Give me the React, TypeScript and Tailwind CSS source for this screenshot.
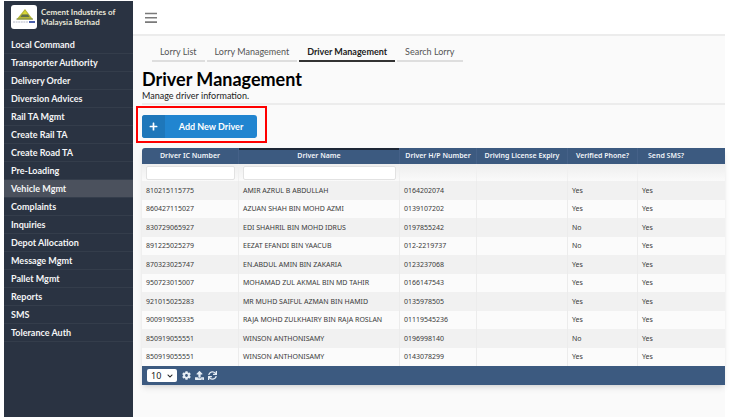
import React, { useState } from 'react';
import { FaChevronDown, FaCog, FaPlus, FaSync, FaUpload } from 'react-icons/fa';

interface Driver {
    ic: string;
    name: string;
    phone: string;
    verified: string;
    sms: string;
}

const menuItems = [
    'Local Command',
    'Transporter Authority',
    'Delivery Order',
    'Diversion Advices',
    'Rail TA Mgmt',
    'Create Rail TA',
    'Create Road TA',
    'Pre-Loading',
    'Vehicle Mgmt',
    'Complaints',
    'Inquiries',
    'Depot Allocation',
    'Message Mgmt',
    'Pallet Mgmt',
    'Reports',
    'SMS',
    'Tolerance Auth',
];

const tabs = ['Lorry List', 'Lorry Management', 'Driver Management', 'Search Lorry'];

const drivers: Driver[] = [
    { ic: '810215115775', name: 'AMIR AZRUL B ABDULLAH', phone: '0164202074', verified: 'Yes', sms: 'Yes' },
    { ic: '860427115027', name: 'AZUAN SHAH BIN MOHD AZMI', phone: '0139107202', verified: 'Yes', sms: 'Yes' },
    { ic: '830729065927', name: 'EDI SHAHRIL BIN MOHD IDRUS', phone: '0197855242', verified: 'No', sms: 'Yes' },
    { ic: '891225025279', name: 'EEZAT EFANDI BIN YAACUB', phone: '012-2219737', verified: 'No', sms: 'Yes' },
    { ic: '870323025747', name: 'EN.ABDUL AMIN BIN ZAKARIA', phone: '0123237068', verified: 'Yes', sms: 'Yes' },
    { ic: '950723015007', name: 'MOHAMAD ZUL AKMAL BIN MD TAHIR', phone: '0166147543', verified: 'Yes', sms: 'Yes' },
    { ic: '921015025283', name: 'MR MUHD SAIFUL AZMAN BIN HAMID', phone: '0135978505', verified: 'Yes', sms: 'Yes' },
    { ic: '900919055335', name: 'RAJA MOHD ZULKHAIRY BIN RAJA ROSLAN', phone: '01119545236', verified: 'Yes', sms: 'Yes' },
    { ic: '850919055551', name: 'WINSON ANTHONISAMY', phone: '0196998140', verified: 'No', sms: 'Yes' },
    { ic: '850919055551', name: 'WINSON ANTHONISAMY', phone: '0143078299', verified: 'Yes', sms: 'Yes' },
];

const Logo: React.FC = () => (
    <svg viewBox="0 0 26 24" className="h-6 w-[26px] shrink-0 rounded-[3px] bg-white" aria-hidden="true">
        <path d="M14 4 L22 14.5 H5.5 Z" fill="#b3b532" />
        <path d="M14 5.5 L17 9.5 H11 Z" fill="#d9d636" />
        <path d="M11 9.5 H17 L18.5 12 H9.5 Z" fill="#5f6e4a" />
        <path d="M5.5 14 H22" stroke="#7d8a4a" strokeWidth="1" />
        <path d="M2 17 H17" stroke="#b4b8c8" strokeWidth="1" strokeDasharray="2 0.6" />
        <path d="M18 17 H24" stroke="#4a60ac" strokeWidth="2" />
    </svg>
);

const Sidebar: React.FC = () => (
    <aside className="w-[129px] shrink-0 bg-[#2a3342] text-[#f4f5f6]">
        <div className="flex h-[35px] items-start gap-1 pt-1 pl-[7px]">
            <Logo />
            <p className="pt-[2px] text-[8px] leading-[10px] font-bold text-[#e8e6d8]">
                Cement Industries of
                <br />
                Malaysia Berhad
            </p>
        </div>
        <nav>
            {menuItems.map((item) => (
                <a
                    key={item}
                    href="#"
                    className={`block h-[18px] border-b border-[#343d4b] pl-[7px] text-[9px] leading-[18px] font-bold ${item === 'Vehicle Mgmt' ? 'bg-[#4b515d]' : ''}`}
                >
                    {item}
                </a>
            ))}
        </nav>
    </aside>
);

const DriverTable: React.FC = () => {
    const [pageSize, setPageSize] = useState('10');
    const headClass = 'h-4 border-r border-[#456188] p-0 text-center font-semibold';
    const cellClass = 'border-r border-[#ececec] py-0 pl-1 whitespace-nowrap';
    const filterClass = 'block h-[14px] w-full rounded-[2px] border border-[#e2e2e2] bg-white px-1';

    return (
        <div className="mt-[5px] overflow-hidden rounded-tl-[3px] font-['Noto_Sans',sans-serif] text-[7px] shadow-md">
            <table className="w-full table-fixed border-separate border-spacing-0 leading-[10px] text-[#3a3a3a]">
                <colgroup>
                    <col className="w-[97px]" />
                    <col className="w-[161px]" />
                    <col className="w-[77px]" />
                    <col className="w-[91px]" />
                    <col className="w-[70px]" />
                    <col />
                </colgroup>
                <thead>
                    <tr className="bg-[#3c5a80] text-[#f2f5f9]">
                        <th className={headClass}>Driver IC Number</th>
                        <th className={`${headClass} shadow-[inset_0_2px_0_#1d2736]`}>Driver Name</th>
                        <th className={headClass}>Driver H/P Number</th>
                        <th className={headClass}>Driving License Expiry</th>
                        <th className={headClass}>Verified Phone?</th>
                        <th className="h-4 p-0 pl-[10px] text-left font-semibold">Send SMS?</th>
                    </tr>
                    <tr className="bg-gradient-to-b from-[#eeeeee] to-[#fafafa]">
                        <td className="h-[17px] border-r border-[#f0f0f0] pt-px pr-[3px] pb-0 pl-1">
                            <input type="text" aria-label="Filter by IC number" className={filterClass} />
                        </td>
                        <td className="h-[17px] border-r border-[#f0f0f0] pt-px pr-[3px] pb-0 pl-1">
                            <input type="text" aria-label="Filter by name" className={filterClass} />
                        </td>
                        <td className="border-r border-[#f0f0f0]" />
                        <td className="border-r border-[#f0f0f0]" />
                        <td className="border-r border-[#f0f0f0]" />
                        <td />
                    </tr>
                </thead>
                <tbody>
                    {drivers.map((d, i) => (
                        <tr key={i} className="odd:h-[19px] odd:bg-[#f1f1f1] even:h-[18px] even:bg-[#fbfbfb]">
                            <td className={cellClass}>{d.ic}</td>
                            <td className={cellClass}>{d.name}</td>
                            <td className={cellClass}>{d.phone}</td>
                            <td className={cellClass} />
                            <td className={cellClass}>{d.verified}</td>
                            <td className="py-0 pl-1">{d.sms}</td>
                        </tr>
                    ))}
                </tbody>
            </table>
            <div className="flex h-[19px] items-center gap-1 bg-[#3c5a80] pl-[5px] text-[#e6edf5]">
                <div className="relative mr-px h-[13px] w-[30px]">
                    <select
                        aria-label="Rows per page"
                        value={pageSize}
                        onChange={(e) => setPageSize(e.target.value)}
                        className="block h-[13px] w-full appearance-none rounded-[2px] bg-white pl-1 text-[9px] leading-[13px] text-[#222]"
                    >
                        <option>10</option>
                        <option>25</option>
                        <option>50</option>
                    </select>
                    <FaChevronDown className="pointer-events-none absolute top-1 right-1 size-[6px] text-[#222]" />
                </div>
                <button type="button" aria-label="Settings">
                    <FaCog className="size-[9px]" />
                </button>
                <button type="button" aria-label="Export">
                    <FaUpload className="size-[9px]" />
                </button>
                <button type="button" aria-label="Refresh">
                    <FaSync className="size-[9px]" />
                </button>
            </div>
        </div>
    );
};

const App: React.FC = () => {
    const [activeTab, setActiveTab] = useState('Driver Management');

    return (
        <div className="flex min-h-screen bg-white pt-px pr-[7px] pb-[2px] pl-1 font-['Lato',sans-serif]">
            <Sidebar />
            <div className="flex min-w-0 grow flex-col bg-[#fafafa]">
                <header className="flex h-[35px] shrink-0 items-center border-b-2 border-[#ececec] bg-white pl-3">
                    <button type="button" aria-label="Toggle menu">
                        <svg viewBox="0 0 12 12" className="size-3" fill="none" stroke="#7a7a7a" strokeWidth="1.6">
                            <path d="M0 1.5 H12 M0 5.8 H12 M0 10.1 H12" />
                        </svg>
                    </button>
                </header>

                <main className="pl-[9px]">
                    <div className="flex gap-[2px] pt-2 pl-[10px]">
                        {tabs.map((tab) => (
                            <button
                                key={tab}
                                type="button"
                                onClick={() => setActiveTab(tab)}
                                className={`h-[18px] border-b-2 px-2 text-[9px] leading-4 ${tab === activeTab ? 'border-[#333] font-bold text-[#222]' : 'border-[#dedede] text-[#555]'}`}
                            >
                                {tab}
                            </button>
                        ))}
                    </div>

                    <h1 className="mt-[6px] text-[18px] leading-[22px] font-bold text-black">Driver Management</h1>
                    <p className="h-[15px] border-b-2 border-[#ececec] text-[9px] leading-[12px] text-[#222]">Manage driver information.</p>

                    <div className="-ml-[6px] mt-px w-[131px] border-2 border-[#ff0000] pt-[7px] pb-[3px] pl-1">
                        <button type="button" className="flex h-[23px] w-[115px] items-center overflow-hidden rounded-[3px] bg-[#2185d0] text-[9px] font-bold text-white">
                            <span className="flex h-full w-[23px] items-center justify-center bg-[#1e77ba]">
                                <FaPlus className="size-[9px]" />
                            </span>
                            <span className="grow text-center">Add New Driver</span>
                        </button>
                    </div>

                    <DriverTable />
                </main>
            </div>
        </div>
    );
};

export default App;
